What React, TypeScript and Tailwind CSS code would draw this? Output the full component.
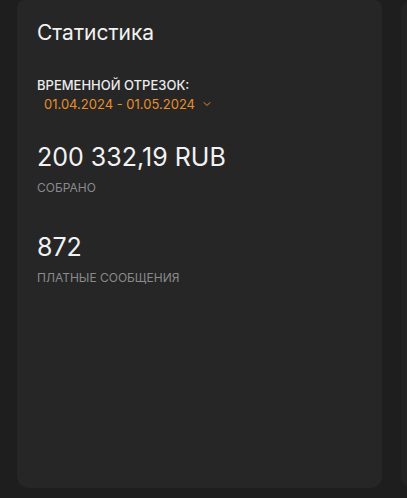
import { ChevronDown } from "lucide-react";

export default function App() {
    const stats = [
        { value: "200 332,19 RUB", label: "СОБРАНО" },
        { value: "872", label: "ПЛАТНЫЕ СООБЩЕНИЯ" },
    ];

    return (
        <div className="w-[407px] h-[498px] bg-[#1e1e1e] overflow-hidden flex gap-[19px] pl-[17px] font-['Inter',sans-serif]">
            <div className="w-[365px] h-[488px] shrink-0 bg-[#262626] rounded-b-xl rounded-t-lg px-5 pt-[19px]">
                <h1 className="text-[21px] leading-7 text-[#f2f2f2]">Статистика</h1>

                <div className="mt-[30px]">
                    <div className="text-[13px] leading-4 font-medium text-[#ececec]">ВРЕМЕННОЙ ОТРЕЗОК:</div>
                    <button className="flex items-center gap-1.5 pl-[7px] mt-[3px] text-[13px] leading-4 text-[#e88f2a]">
                        01.04.2024 - 01.05.2024
                        <ChevronDown className="w-3 h-3" strokeWidth={2} />
                    </button>
                </div>

                <div className="mt-[29px] flex flex-col gap-[35px]">
                    {stats.map((s, i) => (
                        <div key={i}>
                            <div className="text-[25px] leading-8 text-[#f2f2f2]">{s.value}</div>
                            <div className="mt-[7px] text-[12px] leading-4 text-[#8a8a8a]">{s.label}</div>
                        </div>
                    ))}
                </div>
            </div>
            <div className="w-[365px] h-[488px] shrink-0 bg-[#232323] rounded-xl" />
        </div>
    );
}
